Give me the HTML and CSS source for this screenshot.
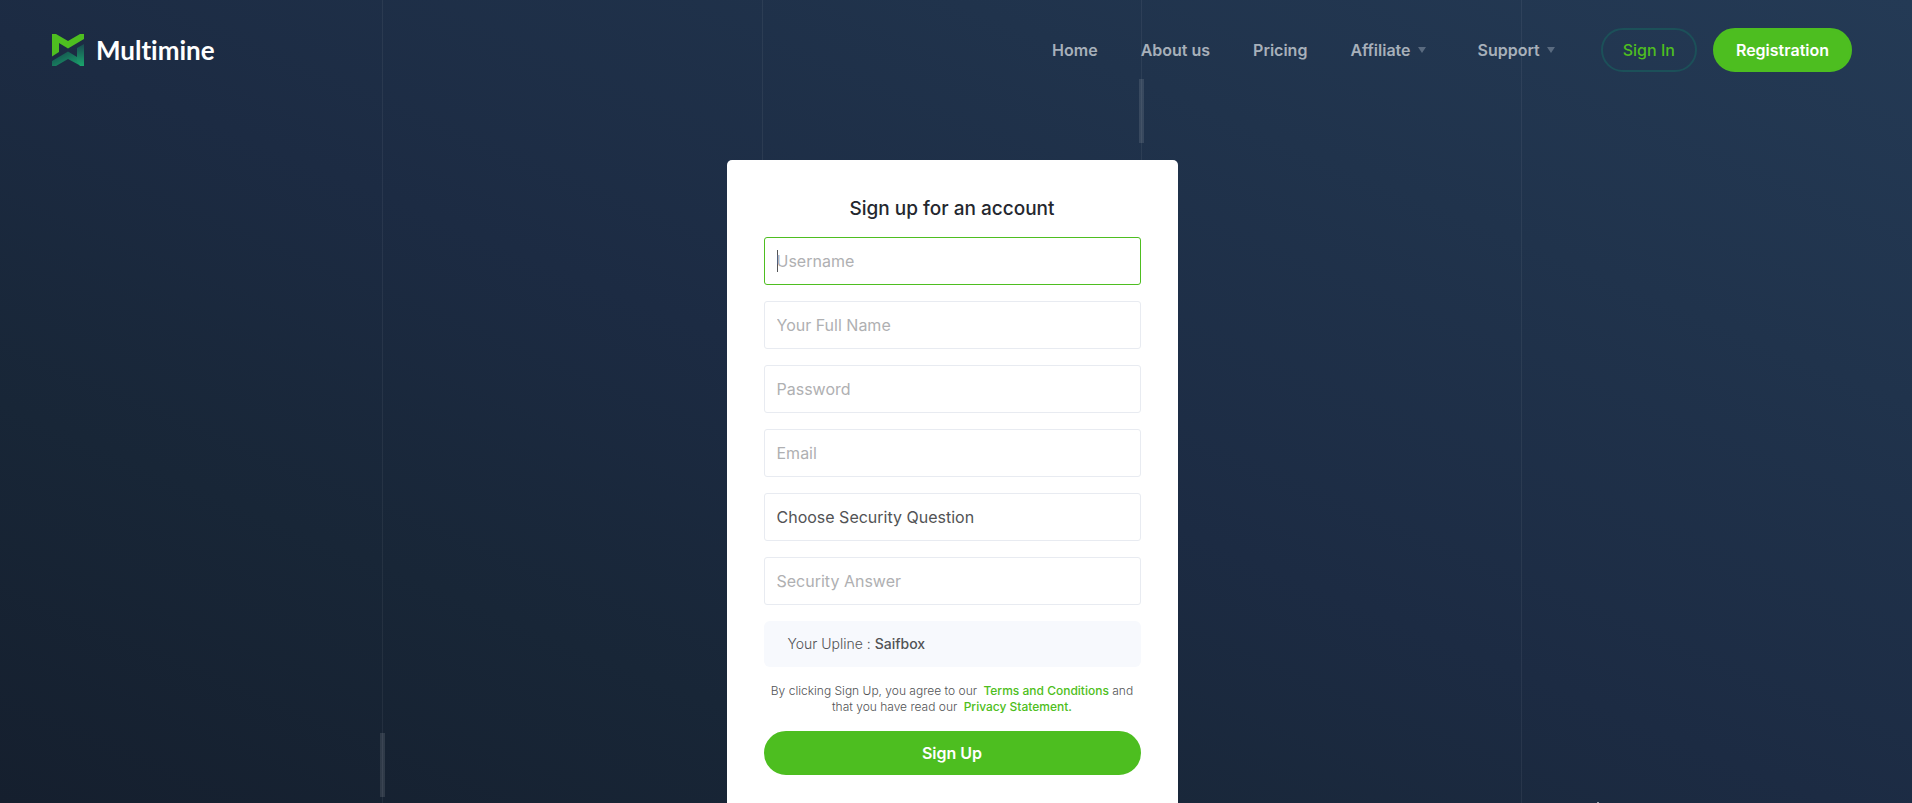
FILE: index.html
```html
<!DOCTYPE html>
<html lang="en">
<head>
<meta charset="utf-8">
<title>Multimine - Sign up</title>
<link rel="stylesheet" href="styles.css">
</head>
<body>
<div class="page">
  <div class="guides" aria-hidden="true">
    <span></span>
    <span class="guide"><i class="runner runner-low"></i></span>
    <span class="guide"></span>
    <span class="guide"><i class="runner runner-high"></i></span>
    <span class="guide"><i class="speck"></i></span>
  </div>
  <header class="header">
    <a class="brand" href="#">
      <svg class="brand-mark" viewBox="0 0 32 32" aria-hidden="true">
        <defs>
          <linearGradient id="deep" x1="0" y1="0" x2="1" y2="1">
            <stop offset="0.2" stop-color="#165a52"/>
            <stop offset="1" stop-color="#1aa56c"/>
          </linearGradient>
          <linearGradient id="side" x1="0" y1="0" x2="0" y2="1">
            <stop offset="0" stop-color="#1a4a50"/>
            <stop offset="1" stop-color="#1aa56c"/>
          </linearGradient>
        </defs>
        <path fill="url(#deep)" d="M0 27L16 17.5L25 23L32 27V32H29L16 25L4 32H0Z"/>
        <path fill="url(#side)" d="M32 10V32H28L25 27V14Z"/>
        <path fill="#4ebe20" d="M0 0H4L16 7L28 0H32V5L16 14.5L7 9V18L0 22.5Z"/>
      </svg>
      <span>Multimine</span>
    </a>
    <nav class="nav">
      <a href="#">Home</a>
      <a href="#">About us</a>
      <a href="#">Pricing</a>
      <a class="has-menu" href="#">Affiliate</a>
      <a class="has-menu" href="#">Support</a>
    </nav>
    <div class="actions">
      <a class="btn btn-outline" href="#">Sign In</a>
      <a class="btn btn-solid" href="#">Registration</a>
    </div>
  </header>
  <main class="card">
    <h1>Sign up for an account</h1>
    <form class="form">
      <input class="field" type="text" placeholder="Username" aria-label="Username" autofocus>
      <input class="field" type="text" placeholder="Your Full Name" aria-label="Your Full Name">
      <input class="field" type="password" placeholder="Password" aria-label="Password">
      <input class="field" type="email" placeholder="Email" aria-label="Email">
      <select class="field" aria-label="Security question"><option>Choose Security Question</option></select>
      <input class="field" type="text" placeholder="Security Answer" aria-label="Security Answer">
      <p class="upline">Your Upline : <b>Saifbox</b></p>
      <p class="terms">By clicking Sign Up, you agree to our <a href="#">Terms and Conditions</a> and that you have read our <a href="#">Privacy Statement.</a></p>
      <button class="btn btn-solid btn-wide" type="submit">Sign Up</button>
    </form>
  </main>
</div>
</body>
</html>
```
FILE: styles.css
```css
* { box-sizing: border-box; }
body {
  margin: 0;
  font-family: Inter, "Open Sans", sans-serif;
  font-size: 16px;
  color: #525355;
}
a { text-decoration: none; }
.page {
  position: relative;
  min-height: 100vh;
  padding: 28px 60px 0 52px;
  overflow: hidden;
  background: linear-gradient(to top right, #151f2e 0%, #182637 25%, #1c2b43 48%, #20334c 75%, #243a55 100%);
}
.guides {
  position: absolute;
  inset: 0 11px 0 2px;
  display: grid;
  grid-template-columns: repeat(5, 1fr);
}
.guide {
  position: relative;
  border-left: 1px solid rgba(255, 255, 255, 0.06);
}
.runner {
  position: absolute;
  left: -3px;
  width: 5px;
  height: 64px;
  background: rgba(255, 255, 255, 0.11);
}
.runner-low { bottom: 6px; }
.runner-high { top: 79px; }
.speck {
  position: absolute;
  left: 75px;
  bottom: 0;
  width: 2px;
  height: 1px;
  background: #9aa3ae;
}
.header {
  position: relative;
  display: flex;
  align-items: center;
  height: 44px;
}
.brand {
  display: flex;
  align-items: center;
  gap: 12px;
  margin-right: auto;
  color: #fff;
  font-size: 26px;
  font-family: Lato, sans-serif;
  font-weight: 700;
  font-variant-ligatures: none;
}
.brand-mark { width: 32px; height: 32px; }
.nav {
  display: flex;
  gap: 43px;
  margin-right: 46px;
}
.nav a {
  color: #a7b0ba;
  font-weight: 600;
}
.has-menu {
  display: flex;
  align-items: center;
  gap: 7px;
}
.has-menu + .has-menu { margin-left: 9px; }
.has-menu::after {
  content: "";
  border: 4px solid transparent;
  border-top: 6px solid #5a6b80;
  border-bottom: 0;
}
.actions { display: flex; gap: 16px; }
.btn {
  display: flex;
  align-items: center;
  justify-content: center;
  height: 44px;
  padding: 0 20px;
  border: 2px solid transparent;
  border-radius: 22px;
  font: inherit;
}
.btn-outline { border-color: #1c5059; color: #4ebe20; font-weight: 500; }
.btn-solid { padding: 0 21px; background: #4dbe20; border-color: #4dbe20; color: #fff; font-weight: 600; }
.btn-wide { width: 100%; }
.card {
  position: relative;
  width: 451px;
  max-width: 100%;
  margin: 88px auto 0;
  padding: 35px 37px 28px;
  border-radius: 5px 5px 0 0;
  background: #fff;
}
h1 {
  margin: 0 0 14px;
  color: #24272e;
  font-size: 19px;
  font-weight: 500;
  line-height: 28px;
  text-align: center;
}
.form { display: flex; flex-direction: column; gap: 16px; }
.field {
  appearance: none;
  width: 100%;
  height: 48px;
  padding: 0 12px;
  border: 1px solid #e8ebf1;
  border-radius: 3px;
  outline: 0;
  background: #fff;
  color: #525355;
  font: inherit;
}
.field::placeholder { color: #afb0b2; }
.field:focus { border-color: #4ebe20; }
.field:focus:placeholder-shown {
  background: linear-gradient(#525355, #525355) 12px 50% / 1px 22px no-repeat #fff;
  caret-color: transparent;
}
.upline {
  margin: 0;
  padding: 0 24px;
  border-radius: 6px;
  background: #f7f9fd;
  font-size: 14px;
  font-weight: 300;
  line-height: 46px;
}
.upline b { font-weight: 500; }
.terms {
  margin: 0;
  font-size: 12px;
  font-weight: 300;
  line-height: 16px;
  text-align: center;
}
.terms a { margin-left: 3px; color: #4ebe20; font-weight: 500; }
```
